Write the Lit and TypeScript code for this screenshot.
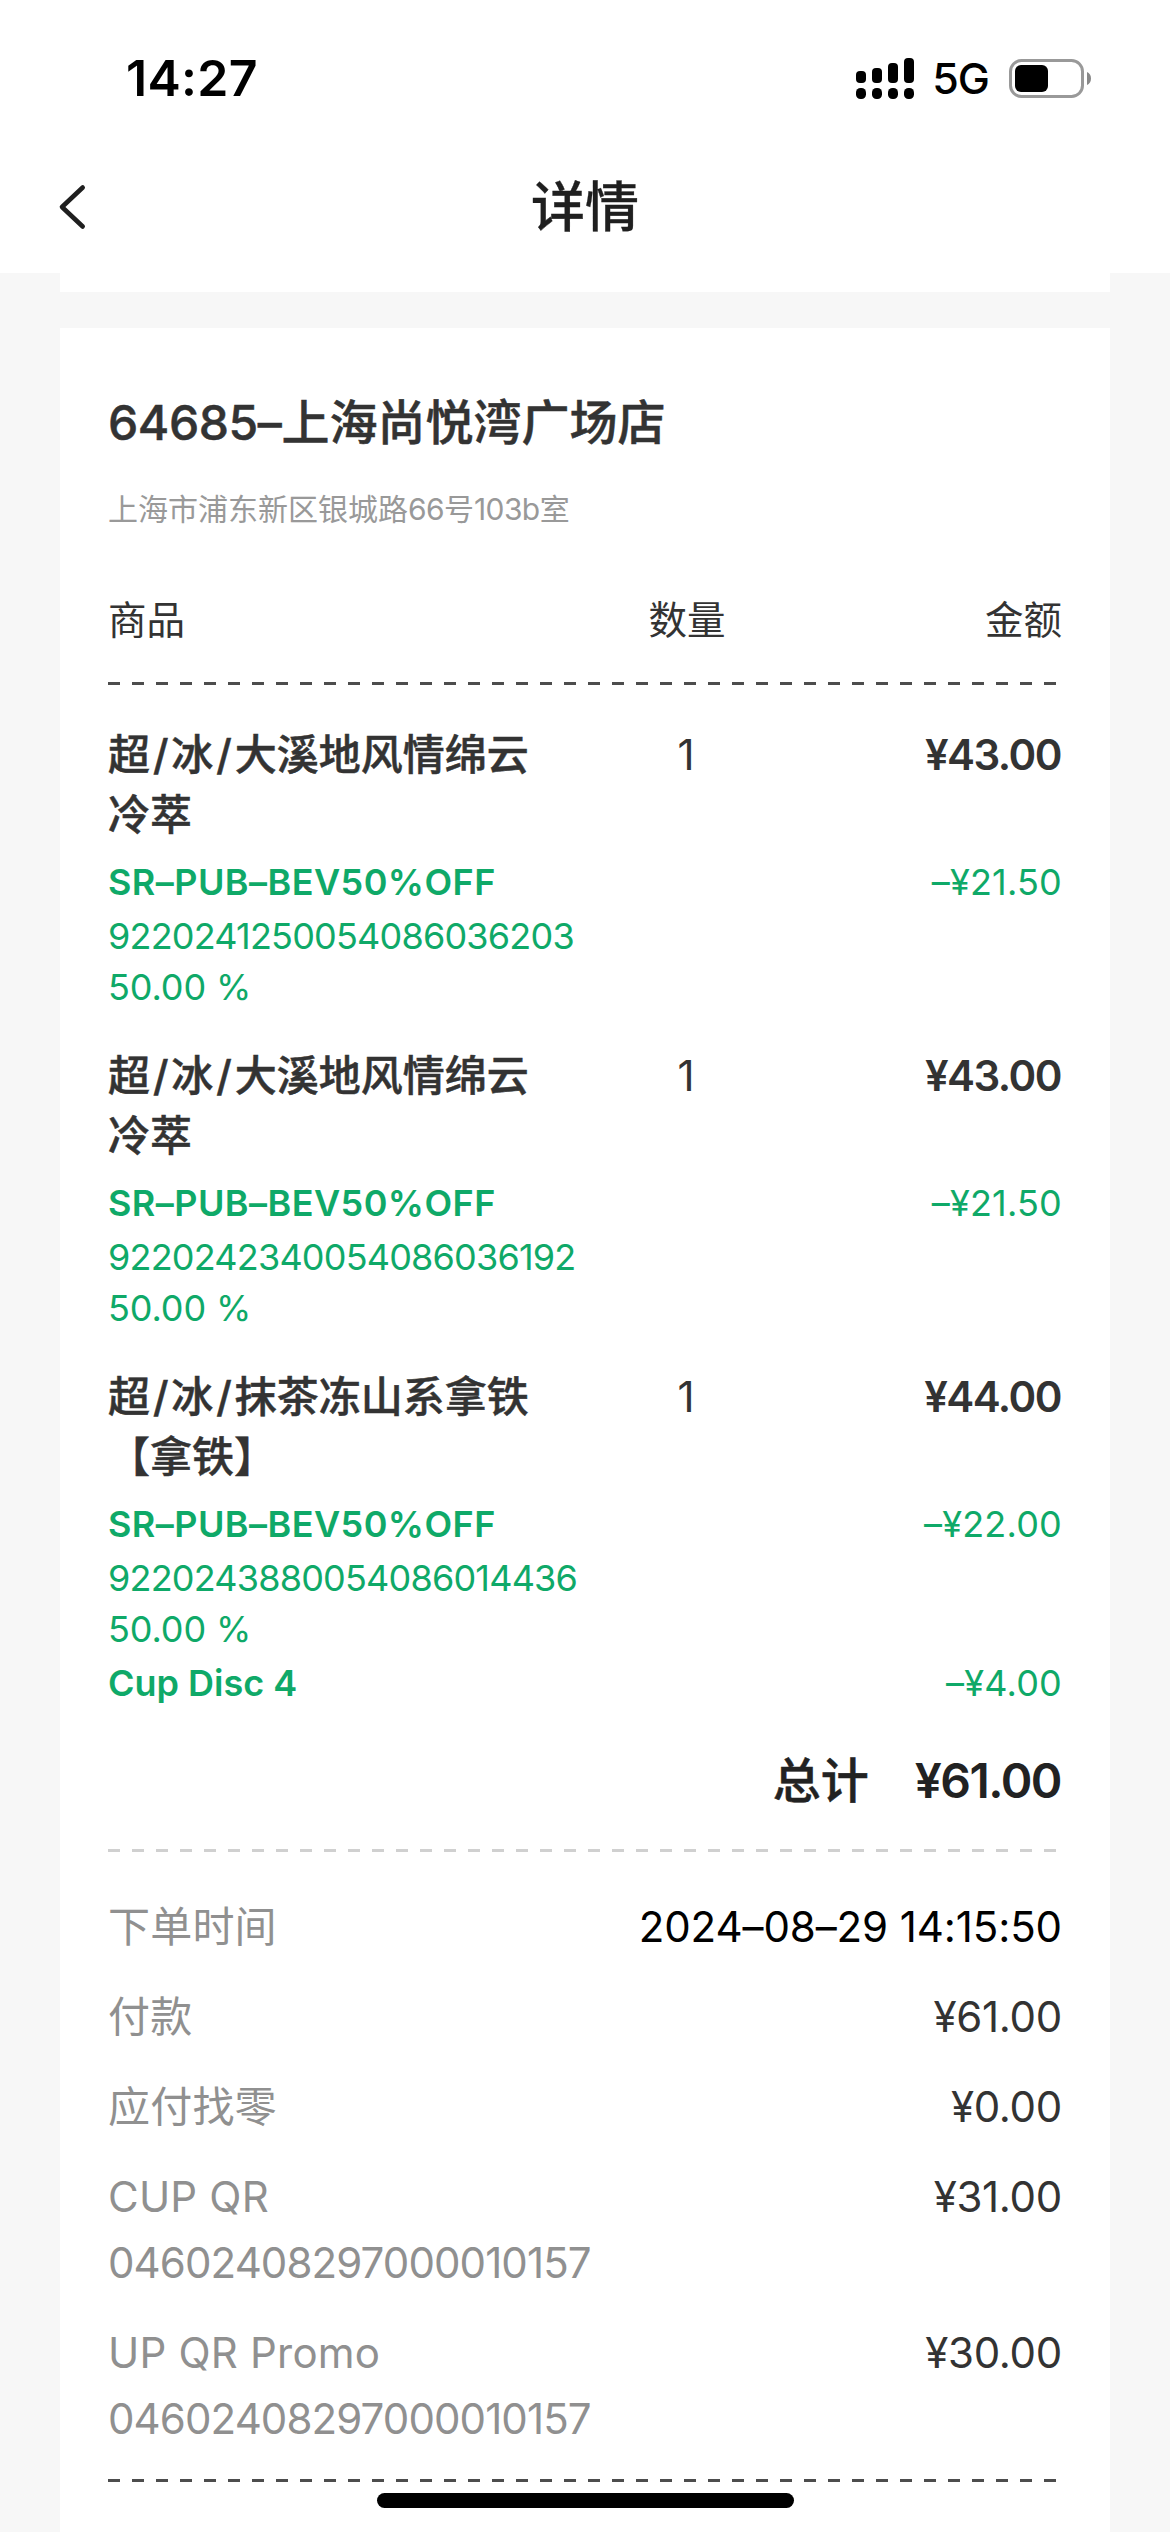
import { LitElement, html, css, svg } from "lit";
import { customElement, property } from "lit/decorators.js";

interface Discount {
  name: string;
  amount: string;
  details: string[];
}

interface OrderItem {
  name: string[];
  quantity: number;
  price: string;
  discounts: Discount[];
}

interface SummaryRow {
  label: string;
  reference?: string;
  value: string;
  strong?: boolean;
}

const STORE = {
  name: ["64685–", "上海尚悦湾广场店"],
  address: ["上海市浦东新区银城路", "66", "号", "103b", "室"],
};

const ITEMS: OrderItem[] = [
  {
    name: ["超/冰/大溪地风情绵云", "冷萃"],
    quantity: 1,
    price: "¥43.00",
    discounts: [
      { name: "SR–PUB–BEV50%OFF", amount: "–¥21.50", details: ["9220241250054086036203", "50.00 %"] },
    ],
  },
  {
    name: ["超/冰/大溪地风情绵云", "冷萃"],
    quantity: 1,
    price: "¥43.00",
    discounts: [
      { name: "SR–PUB–BEV50%OFF", amount: "–¥21.50", details: ["9220242340054086036192", "50.00 %"] },
    ],
  },
  {
    name: ["超/冰/抹茶冻山系拿铁", "【拿铁】"],
    quantity: 1,
    price: "¥44.00",
    discounts: [
      { name: "SR–PUB–BEV50%OFF", amount: "–¥22.00", details: ["9220243880054086014436", "50.00 %"] },
      { name: "Cup Disc 4", amount: "–¥4.00", details: [] },
    ],
  },
];

const SUMMARY: SummaryRow[] = [
  { label: "下单时间", value: "2024–08–29 14:15:50", strong: true },
  { label: "付款", value: "¥61.00" },
  { label: "应付找零", value: "¥0.00" },
  { label: "CUP QR", reference: "04602408297000010157", value: "¥31.00" },
  { label: "UP QR Promo", reference: "04602408297000010157", value: "¥30.00" },
];

@customElement("status-bar")
export class StatusBar extends LitElement {
  static styles = css`
    :host {
      display: flex;
      align-items: center;
      justify-content: space-between;
      height: 156px;
      box-sizing: border-box;
      padding: 0 79px 0 126px;
      color: #000;
    }
    .time {
      font-size: 50px;
      font-weight: 600;
      line-height: 60px;
      letter-spacing: 0.3px;
    }
    .right {
      display: flex;
      align-items: center;
    }
    .signal {
      display: block;
      width: 58px;
      height: 41px;
    }
    .network {
      font-size: 43px;
      font-weight: 500;
      line-height: 52px;
      letter-spacing: -1px;
      margin-left: 18px;
    }
    .battery {
      display: block;
      width: 82px;
      height: 39px;
      margin-left: 20px;
    }
  `;

  render() {
    const tops = [13, 10, 5, 0];
    return html`
      <span class="time">14:27</span>
      <div class="right">
        <svg class="signal" viewBox="0 0 58 41">
          ${tops.map(
            (top, i) => svg`
              <rect x=${i * 16} y=${top} width="10" height=${25 - top} rx="4" />
              <rect x=${i * 16} y="30" width="10" height="11" rx="4.5" />`,
          )}
        </svg>
        <span class="network">5G</span>
        <svg class="battery" viewBox="0 0 82 39">
          <rect x="1.5" y="1.5" width="72" height="36" rx="11" fill="none" stroke="#999" stroke-width="3" />
          <rect x="6" y="6" width="33" height="27" rx="6" />
          <path d="M78 13C80.500 14 82 16.500 82 19.500S80.500 25 78 26Z" fill="#888" />
        </svg>
      </div>
    `;
  }
}

@customElement("nav-bar")
export class NavBar extends LitElement {
  @property() heading = "";

  static styles = css`
    :host {
      display: grid;
      grid-template-columns: 100px 1fr 100px;
      align-items: center;
      height: 117px;
      box-sizing: border-box;
      padding-bottom: 15px;
    }
    .back {
      display: block;
      width: 28px;
      height: 46px;
      margin-left: 58px;
    }
    .heading {
      padding-top: 2px;
      font-size: 54px;
      font-weight: 500;
      line-height: 72px;
      text-align: center;
      color: #1f1f1f;
      -webkit-text-stroke: 0.3px #1f1f1f;
    }
  `;

  render() {
    return html`
      <svg class="back" viewBox="0 0 28 46" fill="none" stroke="#1f1f1f" stroke-width="4.600"
        stroke-linecap="round" stroke-linejoin="round">
        <path d="M24.700 3.500L4 23L24.700 42.500" />
      </svg>
      <span class="heading">${this.heading}</span>
    `;
  }
}

@customElement("order-item")
export class OrderItemRow extends LitElement {
  @property({ attribute: false }) item!: OrderItem;

  static styles = css`
    :host {
      display: block;
    }
    .main {
      display: grid;
      grid-template-columns: 470px 216px 1fr;
      padding-top: 1px;
      font-size: 42px;
      line-height: 60px;
      color: #333;
    }
    .name {
      font-weight: 500;
      text-spacing-trim: space-all;
      -webkit-text-stroke: 0.5px #333;
    }
    .slash {
      margin: 0 2.900px;
    }
    .quantity {
      text-align: center;
    }
    .price {
      font-weight: 600;
      letter-spacing: -1.5px;
      text-align: right;
      padding-right: 1px;
    }
    .discounts {
      display: flex;
      flex-direction: column;
      gap: 1px;
      margin-top: 10px;
      font-size: 36px;
      line-height: 51px;
      color: #0fa968;
    }
    .headline {
      display: flex;
      justify-content: space-between;
      line-height: 54px;
      margin-bottom: 2px;
    }
    .title {
      font-weight: 600;
      letter-spacing: 0.45px;
    }
    .short {
      letter-spacing: 0;
    }
    .amount {
      letter-spacing: 0.2px;
    }
    .code {
      letter-spacing: -0.8px;
    }
    .rate {
      letter-spacing: -0.1px;
    }
  `;

  private nameLine(line: string) {
    return line.split("/").map((part, i) => (i ? html`<span class="slash">/</span>${part}` : part));
  }

  render() {
    const { name, quantity, price, discounts } = this.item;
    return html`
      <div class="main">
        <div class="name">${name.map((line) => html`<div>${this.nameLine(line)}</div>`)}</div>
        <div class="quantity">${quantity}</div>
        <div class="price">${price}</div>
      </div>
      <div class="discounts">
        ${discounts.map(
          (d) => html`
            <div class="discount">
              <div class="headline">
                <span class="title ${d.details.length ? "" : "short"}">${d.name}</span>
                <span class="amount">${d.amount}</span>
              </div>
              ${d.details.map((text, i) => html`<div class=${i ? "rate" : "code"}>${text}</div>`)}
            </div>
          `,
        )}
      </div>
    `;
  }
}

@customElement("app-root")
export class AppRoot extends LitElement {
  static styles = css`
    :host {
      display: block;
      position: relative;
      width: 1170px;
      height: 2532px;
      overflow: hidden;
      background: #f7f7f7;
      font-family: Inter, "Noto Sans CJK SC", sans-serif;
    }
    .header {
      background: #fff;
    }
    .content {
      display: flex;
      flex-direction: column;
      gap: 36px;
      padding: 0 60px;
    }
    .previous {
      height: 19px;
      background: #fff;
    }
    .card {
      height: 2204px;
      box-sizing: border-box;
      padding: 65px 48px 0;
      background: #fff;
    }
    .store {
      font-size: 48px;
      font-weight: 500;
      line-height: 60px;
      color: #333;
      -webkit-text-stroke: 0.5px #333;
    }
    .store-id {
      letter-spacing: -0.4px;
    }
    .address {
      margin-top: 35px;
      font-size: 30px;
      line-height: 42px;
      color: #999;
    }
    .digits {
      letter-spacing: -0.6px;
    }
    .columns {
      display: grid;
      grid-template-columns: 470px 218px 1fr;
      margin-top: 63px;
      font-size: 38.500px;
      line-height: 54px;
      color: #333;
    }
    .center {
      text-align: center;
    }
    .end {
      text-align: right;
    }
    .dash {
      height: 3px;
      margin-top: 35px;
      background: repeating-linear-gradient(90deg, #4d4d4d 0 12px, transparent 12px 24px);
    }
    .dash-light {
      margin-top: 38px;
      background: repeating-linear-gradient(90deg, #d0d0d0 0 12px, transparent 12px 24px);
    }
    .dash-end {
      margin-top: 27px;
    }
    .items {
      display: flex;
      flex-direction: column;
      gap: 32px;
      margin-top: 39px;
    }
    .total {
      display: flex;
      justify-content: flex-end;
      gap: 46px;
      margin-top: 39px;
      padding-right: 1px;
      font-size: 48px;
      font-weight: 600;
      line-height: 60px;
      color: #222;
    }
    .total-label {
      font-weight: 500;
      -webkit-text-stroke: 0.5px #222;
    }
    .total-value {
      letter-spacing: -1.5px;
    }
    .summary {
      display: flex;
      flex-direction: column;
      gap: 24px;
      margin-top: 42px;
      font-size: 42px;
      line-height: 66px;
      color: #333;
    }
    .row {
      display: flex;
      justify-content: space-between;
    }
    .label {
      color: #909090;
      letter-spacing: 0.2px;
    }
    .reference {
      letter-spacing: -0.9px;
    }
    .value {
      letter-spacing: -0.3px;
    }
    .strong {
      letter-spacing: -0.1px;
      color: #000;
    }
    .home {
      position: absolute;
      left: 377px;
      top: 2493px;
      width: 417px;
      height: 15px;
      border-radius: 8px;
      background: #000;
    }
  `;

  render() {
    return html`
      <div class="header">
        <status-bar></status-bar>
        <nav-bar heading="详情"></nav-bar>
      </div>
      <div class="content">
        <div class="previous"></div>
        <div class="card">
          <div class="store"><span class="store-id">${STORE.name[0]}</span>${STORE.name[1]}</div>
          <div class="address">${STORE.address.map((part, i) => (i % 2 ? html`<span class="digits">${part}</span>` : part))}</div>
          <div class="columns">
            <span>商品</span>
            <span class="center">数量</span>
            <span class="end">金额</span>
          </div>
          <div class="dash"></div>
          <div class="items">${ITEMS.map((item) => html`<order-item .item=${item}></order-item>`)}</div>
          <div class="total">
            <span class="total-label">总计</span>
            <span class="total-value">¥61.00</span>
          </div>
          <div class="dash dash-light"></div>
          <div class="summary">
            ${SUMMARY.map(
              (row) => html`
                <div class="row">
                  <div class="label">
                    <div>${row.label}</div>
                    ${row.reference ? html`<div class="reference">${row.reference}</div>` : ""}
                  </div>
                  <div class="value ${row.strong ? "strong" : ""}">${row.value}</div>
                </div>
              `,
            )}
          </div>
          <div class="dash dash-end"></div>
        </div>
      </div>
      <div class="home"></div>
    `;
  }
}
